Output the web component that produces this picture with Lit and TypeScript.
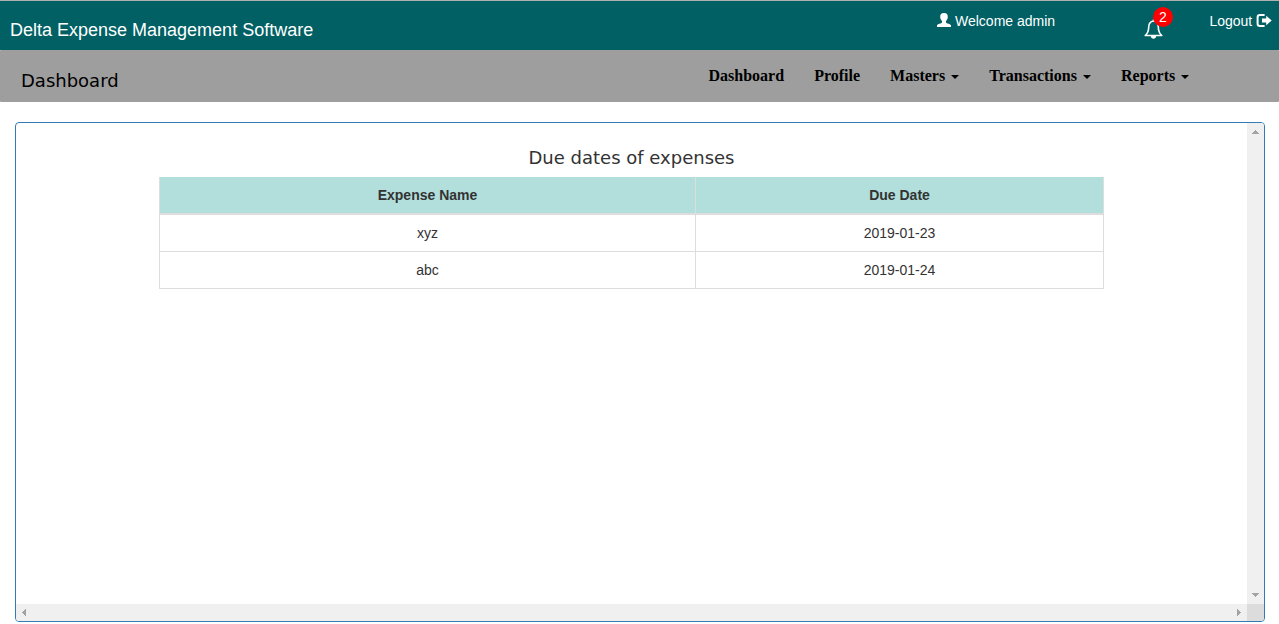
import { LitElement, html, css, svg } from "lit";
import { customElement } from "lit/decorators.js";

const arrow = (d: string) => html`<svg width="17" height="17" viewBox="0 0 17 17" shape-rendering="crispEdges">${svg`<path d=${d} fill="#a3a3a3"/>`}</svg>`;

@customElement("app-root")
export class AppRoot extends LitElement {
  static styles = css`
    * { box-sizing: border-box; }
    :host { display: block; height: 624px; overflow: hidden; background: #fff; font: 14px/20px "Liberation Sans", Arial, sans-serif; color: #333; }
    svg { display: block; flex: none; }
    .top { height: 50px; border-top: 1px solid #b0b0b0; background: #006064; color: #fff; display: flex; align-items: flex-start; padding-left: 10px; }
    .brand { font-size: 18px; line-height: 20px; margin-top: 19px; width: 927px; }
    .user { display: flex; margin-top: 10px; width: 206px; }
    .user svg { margin: 2px 4px 0 0; }
    .bell { position: relative; width: 66.4px; padding-top: 18px; }
    .badge { position: absolute; left: 10px; top: 6px; width: 20px; height: 20px; border-radius: 50%; background: #f00; text-align: center; line-height: 20px; }
    .logout { display: flex; margin-top: 10px; gap: 3.6px; }
    .nav { height: 52px; background: #9e9e9e; color: #000; display: flex; padding-left: 21px; border-radius: 1px; }
    .page { font: 18px/20px "DejaVu Sans", Verdana, sans-serif; margin-top: 21px; width: 687.5px; }
    .links { display: flex; gap: 30.05px; margin-top: 16px; font: bold 16px/20px "Liberation Serif", "Times New Roman", serif; }
    .link { display: flex; white-space: nowrap; }
    .caret { width: 0; height: 0; border: 4px solid transparent; border-top-color: #000; border-bottom: 0; margin: 9px 0 0 6px; }
    .panel { margin: 20px 14px 0 15px; height: 500px; border: 1px solid #337ab7; border-radius: 4px; display: grid; grid-template-columns: 1fr 17px; grid-template-rows: 1fr 17px; overflow: hidden; }
    .body { padding: 25px 143px 0; }
    .title { font: 18px/20px "DejaVu Sans", Verdana, sans-serif; text-align: center; margin-bottom: 9px; }
    table { width: 945px; border-collapse: separate; border-spacing: 0; table-layout: fixed; border-left: 1px solid #ddd; }
    .c1 { width: 536px; }
    th, td { height: 37px; padding: 0; text-align: center; border-right: 1px solid #ddd; border-bottom: 1px solid #ddd; line-height: 20px; }
    th { height: 38px; background: #b2dfdb; background-clip: padding-box; border-bottom-width: 2px; }
    .bar { background: #f0f0f0; display: flex; justify-content: space-between; }
    .vert { flex-direction: column; }
    .corner { background: #dcdcdc; }
  `;

  render() {
    const rows = [["xyz", "2019-01-23"], ["abc", "2019-01-24"]];
    const links: [string, boolean][] = [["Dashboard", false], ["Profile", false], ["Masters", true], ["Transactions", true], ["Reports", true]];
    return html`
      <header class="top">
        <div class="brand">Delta Expense Management Software</div>
        <div class="user">
          <svg width="14" height="14" viewBox="0 0 14 14"><path fill="#fff" d="M7 0C9.8 0 10.9 1.5 10.8 3.8C10.8 5.8 9.9 7.3 9 8.1V9.4C9.3 10.3 13.8 10.9 14 12.3V14H0V12.3C.2 10.9 4.7 10.3 5 9.4V8.1C4.1 7.3 3.2 5.8 3.2 3.8C3.1 1.5 4.2 0 7 0Z"/></svg>
          <span>Welcome admin</span>
        </div>
        <div class="bell">
          <svg width="20" height="21" viewBox="0 0 20 21"><path fill="none" stroke="#fff" stroke-width="1.6" stroke-linejoin="round" d="M10.5 2C7.3 2.5 5.7 5 5.7 8C5.7 12 4.7 14.4 2.2 16.5H18.8C16.3 14.4 15.3 12 15.3 8C15.3 5 13.7 2.5 10.5 2ZM10.5 .4V2"/><path fill="#fff" d="M7.8 17H13.2C13.2 20.6 7.8 20.6 7.8 17Z"/></svg>
          <span class="badge">2</span>
        </div>
        <div class="logout"><span>Logout</span>
          <svg width="16" height="20" viewBox="0 0 16 20"><path fill="none" stroke="#fff" stroke-width="2" d="M8.6 4H4Q1.6 4 1.6 6.3V12.7Q1.6 15 4 15H8.6"/><path fill="#fff" d="M6 7.6H10.2V4.8L15.7 9.5L10.2 14.2V11.4H6Z"/></svg>
        </div>
      </header>
      <nav class="nav">
        <div class="page">Dashboard</div>
        <div class="links">${links.map(([t, c]) => html`<div class="link"><span>${t}</span>${c ? html`<span class="caret"></span>` : ""}</div>`)}</div>
      </nav>
      <main class="panel">
        <section class="body">
          <div class="title">Due dates of expenses</div>
          <table>
            <thead><tr><th class="c1">Expense Name</th><th>Due Date</th></tr></thead>
            <tbody>${rows.map(r => html`<tr>${r.map(v => html`<td>${v}</td>`)}</tr>`)}</tbody>
          </table>
        </section>
        <div class="bar vert">${arrow("M5 11H12V10H11V9H10V8H9V7H8V8H7V9H6V10H5Z")}${arrow("M5 6H12V7H11V8H10V9H9V10H8V9H7V8H6V7H5Z")}</div>
        <div class="bar">${arrow("M10 5V12H9V11H8V10H7V9H6V8H7V7H8V6H9V5Z")}${arrow("M7 5V12H8V11H9V10H10V9H11V8H10V7H9V6H8V5Z")}</div>
        <div class="corner"></div>
      </main>`;
  }
}
